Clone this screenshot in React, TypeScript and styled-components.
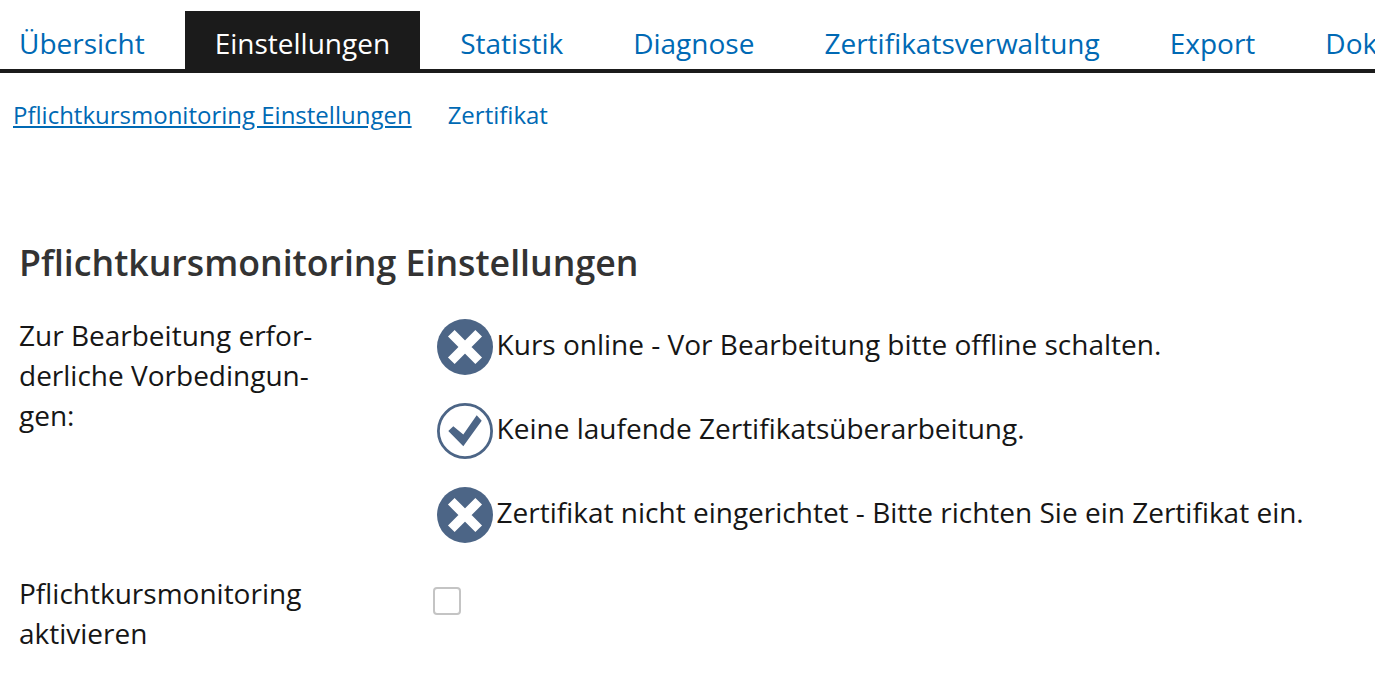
import styled, { createGlobalStyle } from 'styled-components';

const GlobalStyle = createGlobalStyle`
  html, body {
    margin: 0;
    padding: 0;
    background: #fff;
    overflow: hidden;
  }
  body {
    font-family: 'Open Sans', sans-serif;
    color: #161616;
  }
`;

const tabs = [
  'Übersicht',
  'Einstellungen',
  'Statistik',
  'Diagnose',
  'Zertifikatsverwaltung',
  'Export',
  'Dokumentation',
];

const conditions = [
  { ok: false, text: 'Kurs online - Vor Bearbeitung bitte offline schalten.' },
  { ok: true, text: 'Keine laufende Zertifikatsüberarbeitung.' },
  { ok: false, text: 'Zertifikat nicht eingerichtet - Bitte richten Sie ein Zertifikat ein.' },
];

const StatusIcon = ({ ok }: { ok: boolean }) =>
  ok ? (
    <IconSvg viewBox="0 0 56 56">
      <circle cx="28" cy="28" r="26.6" fill="#fff" stroke="#4c6586" strokeWidth="2.8" />
      <polygon
        points="11.3,28 16.3,23.3 26.3,31.5 39.7,12.3 44.7,17.7 26.3,43.3"
        fill="#4c6586"
      />
    </IconSvg>
  ) : (
    <IconSvg viewBox="0 0 56 56">
      <circle cx="28" cy="28" r="28" fill="#4c6586" />
      <path
        d="M14.3 14.3 L41.7 41.7 M41.7 14.3 L14.3 41.7"
        fill="none"
        stroke="#fff"
        strokeWidth="9.4"
      />
    </IconSvg>
  );

export default function App() {
  return (
    <Page>
      <GlobalStyle />
      <TabBar>
        {tabs.map((t) => (
          <Tab key={t} $active={t === 'Einstellungen'}>
            {t}
          </Tab>
        ))}
      </TabBar>
      <SubNav>
        <SubLink $current>Pflichtkursmonitoring Einstellungen</SubLink>
        <SubLink>Zertifikat</SubLink>
      </SubNav>
      <Form>
        <Title>Pflichtkursmonitoring Einstellungen</Title>
        <Row>
          <Label>
            Zur Bearbeitung erfor-
            <br />
            derliche Vorbedingun-
            <br />
            gen:
          </Label>
          <Conditions>
            {conditions.map((c) => (
              <Condition key={c.text}>
                <StatusIcon ok={c.ok} />
                <ConditionText>{c.text}</ConditionText>
              </Condition>
            ))}
          </Conditions>
        </Row>
        <Row>
          <Label>
            Pflichtkursmonitoring
            <br />
            aktivieren
          </Label>
          <CheckBox />
        </Row>
      </Form>
    </Page>
  );
}

const Page = styled.div`
  width: 1375px;
  height: 690px;
  overflow: hidden;
`;

const TabBar = styled.div`
  display: flex;
  align-items: flex-end;
  padding-top: 11px;
  height: 58px;
  border-bottom: 4px solid #1b1b1b;
  white-space: nowrap;
  overflow: hidden;
`;

const Tab = styled.div<{ $active?: boolean }>`
  flex: none;
  height: 58px;
  line-height: 64px;
  padding: 0 30px;
  margin-right: 10px;
  font-size: 28px;
  color: ${({ $active }) => ($active ? '#fff' : '#0069b4')};
  background: ${({ $active }) => ($active ? '#1b1b1b' : 'transparent')};
  &:first-child {
    padding-left: 19px;
  }
`;

const SubNav = styled.div`
  display: flex;
  gap: 36px;
  padding: 25px 13px 0;
`;

const SubLink = styled.a<{ $current?: boolean }>`
  font-size: 24px;
  line-height: 33px;
  color: #0069b4;
  text-decoration: ${({ $current }) => ($current ? 'underline' : 'none')};
`;

const Form = styled.div`
  padding: 0 19px;
`;

const Title = styled.h1`
  margin: 108px 0 0;
  font-size: 35.7px;
  line-height: 46px;
  font-weight: 600;
  color: #333;
`;

const Row = styled.div`
  display: flex;
  margin-top: 30px;
`;

const Label = styled.div`
  width: 414px;
  flex: none;
  font-size: 28px;
  line-height: 40px;
`;

const Conditions = styled.div`
  display: flex;
  flex-direction: column;
  gap: 28px;
  padding-top: 4px;
`;

const Condition = styled.div`
  display: flex;
  align-items: flex-start;
  gap: 3.6px;
  font-size: 28px;
  margin-left: 4px;
`;

const IconSvg = styled.svg`
  display: block;
  flex: none;
  width: 56px;
  height: 56px;
`;

const ConditionText = styled.span`
  line-height: 50px;
  white-space: nowrap;
`;

const CheckBox = styled.div`
  width: 24px;
  height: 24px;
  border: 2px solid #c4c4c4;
  border-radius: 4px;
  margin-top: 14px;
`;
